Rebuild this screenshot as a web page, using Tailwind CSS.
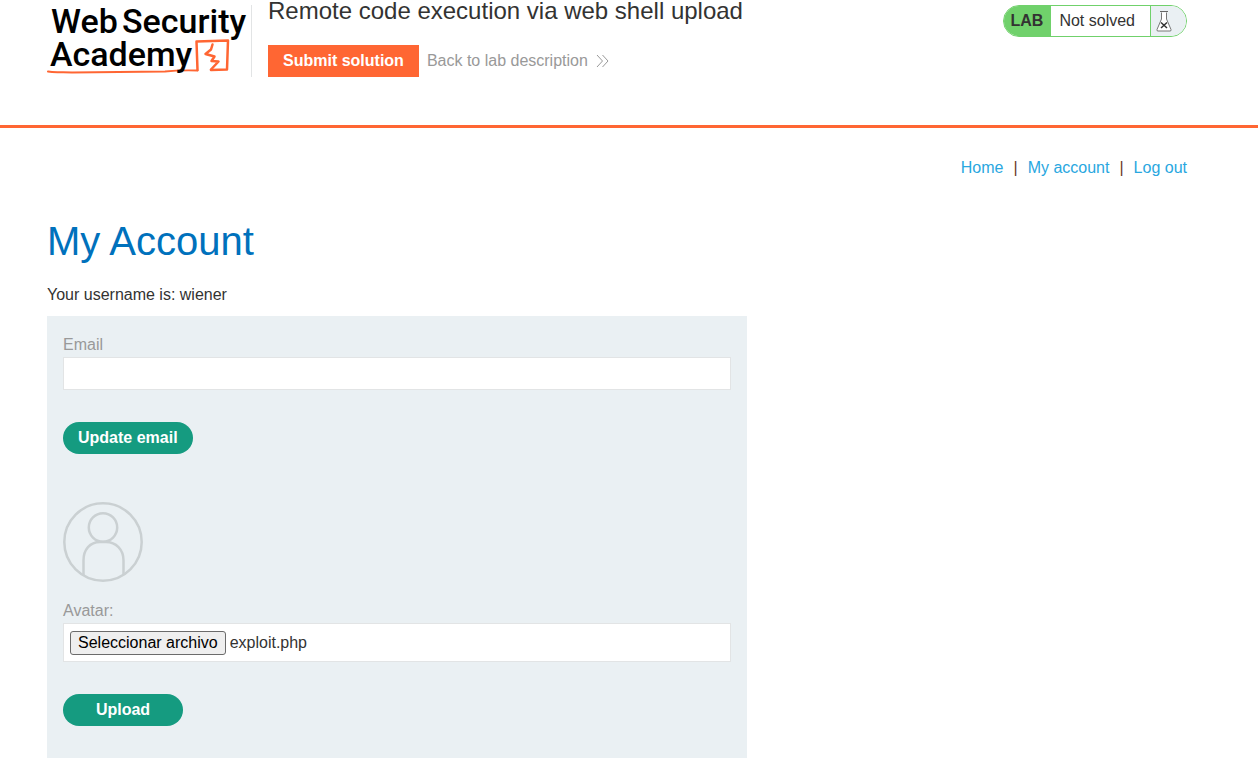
<!DOCTYPE html>
<html lang="en">
<head>
<meta charset="utf-8">
<meta name="viewport" content="width=device-width, initial-scale=1">
<title>Remote code execution via web shell upload</title>
<script src="https://cdn.jsdelivr.net/npm/@tailwindcss/browser@4"></script>
</head>
<body class="bg-white font-['Liberation_Sans',Arial,sans-serif] text-base text-[#333332]">
<header class="flex items-start border-b-3 border-[#ff6633] pr-[71px] pb-12 pl-[47px]">
  <a href="#" class="block shrink-0" aria-label="Web Security Academy">
    <svg class="block" width="204" height="77" viewBox="0 0 204 77">
      <g fill="none" stroke="#ff6633" stroke-linejoin="round" stroke-linecap="round">
        <path stroke-width="2" d="M1 71.500C8 73 15 71.500 25 72.500L118 71.500Q132 70 150.500 70.500"/>
        <path stroke-width="2.500" d="M150.500 70L149.500 41.500L181 40.500L180 69.500L164 70"/>
        <path stroke-width="2.500" d="M165.500 44.500L164 49.500L158.500 54L167.500 56.500L164.500 61L171.500 61.500L164 69.500"/>
      </g>
      <g font-family="Roboto, sans-serif" font-size="34" font-weight="500" fill="#000">
        <text x="4" y="33">Web</text>
        <text x="75" y="33">Security</text>
        <text x="3" y="66">Academy</text>
      </g>
    </svg>
  </a>
  <div class="mt-[5px] h-[72px] w-px shrink-0 bg-[#e2e4e5]"></div>
  <div class="ml-4 flex-1">
    <h2 class="-mt-1 text-2xl leading-[30px]">Remote code execution via web shell upload</h2>
    <div class="mt-[19px] flex items-center gap-2">
      <button type="button" class="h-8 bg-[#ff6633] px-[15px] font-bold whitespace-nowrap text-white">Submit solution</button>
      <a href="#" class="flex items-center gap-2 text-[#999999]">Back to lab description
        <svg width="13" height="14" viewBox="0 0 13 14" fill="none" stroke="#999999" stroke-width="1"><path d="M1 1l5.500 6L1 13M6.500 1L12 7l-5.500 6"/></svg>
      </a>
    </div>
  </div>
  <div class="mt-[5px] flex h-8 shrink-0 overflow-hidden rounded-full border border-[#70d16b] bg-white">
    <div class="flex items-center bg-[#70d16b] pr-2 pl-[7px] font-bold">LAB</div>
    <div class="flex items-center pr-[15px] pl-2">Not solved</div>
    <div class="flex w-9 items-center border-l border-[#70d16b] bg-[#eaf0f3] pl-[5px]">
      <svg width="17" height="21" viewBox="0 0 17 21">
        <path d="M5.500 1.500V8L1 18.500Q.5 20 2 20H14Q15.500 20 15 18.500L10.500 8V1.500" fill="#fff" stroke="#777" stroke-width="1"/>
        <path d="M4 .5h8" stroke="#666"/>
        <path d="M5 11.500l6 5.500M11 11.500l-6 5.500" stroke="#333332" stroke-width="1.500"/>
      </svg>
    </div>
  </div>
</header>
<main class="pt-7 pr-[71px] pb-6 pl-[47px]">
  <nav class="flex justify-end gap-[10px] leading-6">
    <a href="#" class="text-[#29a7df]">Home</a><span class="text-[#6b3a1e]">|</span>
    <a href="#" class="text-[#29a7df]">My account</a><span class="text-[#6b3a1e]">|</span>
    <a href="#" class="text-[#29a7df]">Log out</a>
  </nav>
  <h1 class="mt-9 text-[40px] leading-[50px] text-[#0071bc]">My Account</h1>
  <p class="mt-[17px] leading-6">Your username is: wiener</p>
  <section class="mt-[9px] max-w-[700px] bg-[#eaf0f3] px-4 pt-[17px] pb-8">
    <form>
      <label for="email" class="block leading-6 text-[#999999]">Email</label>
      <input id="email" type="email" class="block h-[33px] w-full border border-[#e2e4e5] bg-white px-2">
      <button type="button" class="mt-8 block h-8 rounded-full bg-[#159b80] px-[15px] font-bold text-white">Update email</button>
    </form>
    <form class="mt-12">
      <svg class="block" width="80" height="80" viewBox="0 0 80 80" fill="none" stroke="#cad0d2" stroke-width="2.500">
        <circle cx="40" cy="40" r="38.700"/>
        <circle cx="40" cy="25.500" r="14.200"/>
        <path d="M20.500 73V58.500C20.500 47.500 27 40 37 40H43C53 40 60.500 47.500 60.500 58.500V73"/>
      </svg>
      <label for="avatar" class="mt-[17px] block leading-6 text-[#999999]">Avatar:</label>
      <div class="relative flex h-[39px] items-center gap-1 border border-[#e2e4e5] bg-white px-[6px]">
        <input id="avatar" type="file" class="sr-only">
        <label for="avatar" class="h-6 rounded-[3px] border border-[#6b6b6b] bg-[#efefef] px-[7px] leading-[22px] text-black">Seleccionar archivo</label>
        <span>exploit.php</span>
      </div>
      <button type="button" class="mt-8 block h-8 w-[120px] rounded-full bg-[#159b80] font-bold text-white">Upload</button>
    </form>
  </section>
</main>
</body>
</html>
